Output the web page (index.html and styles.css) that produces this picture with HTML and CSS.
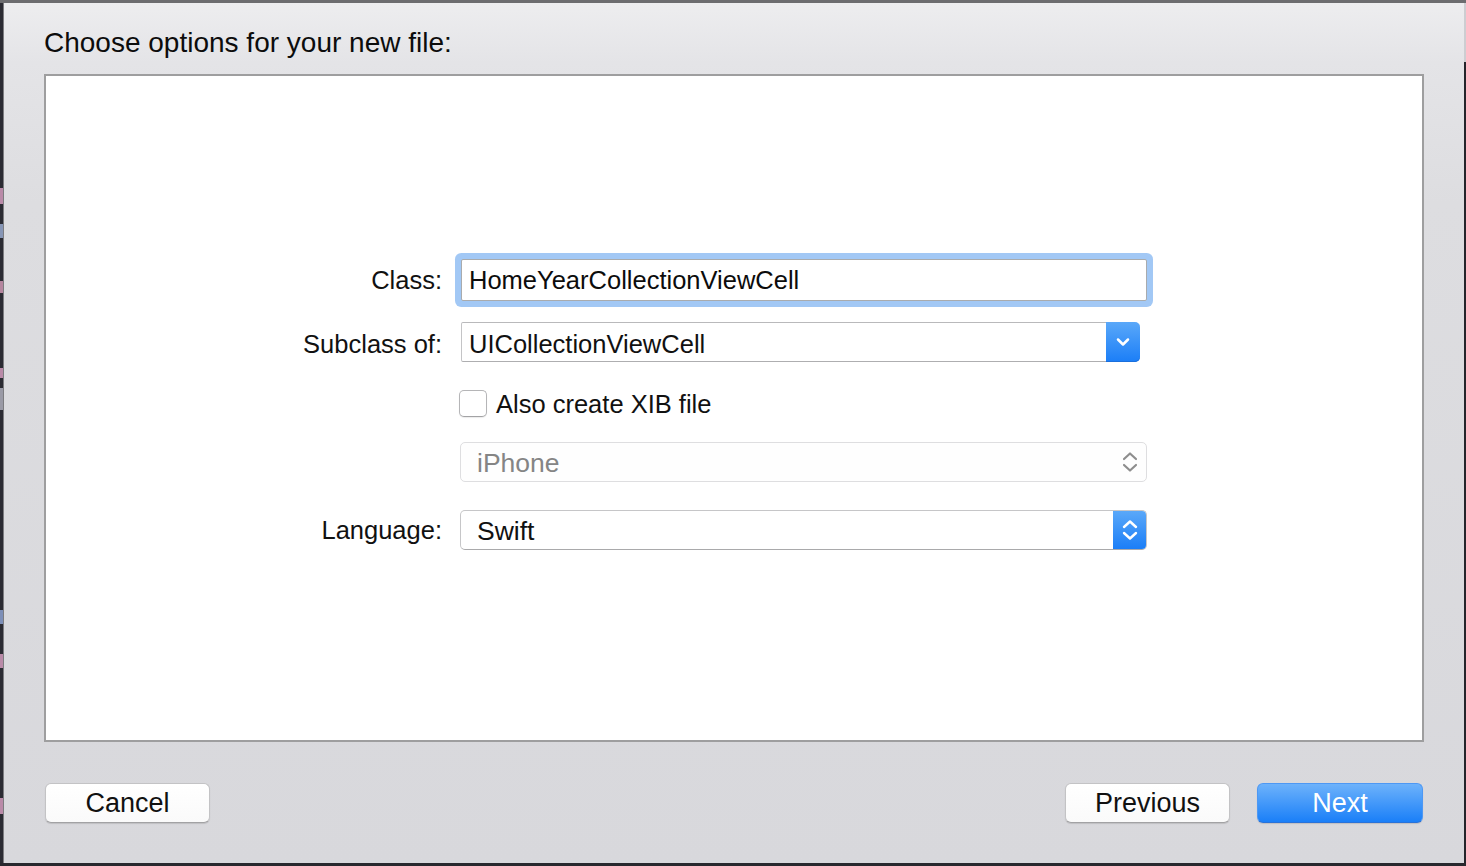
FILE: index.html
```html
<!DOCTYPE html>
<html lang="en">
<head>
<meta charset="utf-8">
<title>Choose options for your new file</title>
<link rel="stylesheet" href="styles.css">
</head>
<body>
<div class="screen">
  <div class="topline"></div>
  <div class="middle">
    <div class="edge-left">
      <span class="frag frag-a"></span>
      <span class="frag frag-b"></span>
      <span class="frag frag-c"></span>
      <span class="frag frag-d"></span>
      <span class="frag frag-e"></span>
      <span class="frag frag-f"></span>
      <span class="frag frag-g"></span>
      <span class="frag frag-h"></span>
    </div>
    <div class="sheet">
      <div class="header">
        <h1 class="title">Choose options for your new file:</h1>
      </div>
      <div class="panel">
        <div class="form">
          <div class="row row-class">
            <div class="label">Class:</div>
            <div class="textfield focused">HomeYearCollectionViewCell</div>
          </div>
          <div class="row row-subclass">
            <div class="label label-sub">Subclass of:</div>
            <div class="popup popup-sub">
              <div class="popup-value">UICollectionViewCell</div>
              <div class="popup-arrow">
                <svg width="16" height="12" viewBox="0 0 16 12"><path d="M3 3.5 L8 8.5 L13 3.5" fill="none" stroke="#fff" stroke-width="2.5" stroke-linecap="round" stroke-linejoin="round"/></svg>
              </div>
            </div>
          </div>
          <div class="row row-check">
            <div class="label"></div>
            <div class="checkbox"></div>
            <div class="check-label">Also create XIB file</div>
          </div>
          <div class="row row-device">
            <div class="label"></div>
            <div class="select disabled">
              <div class="select-value">iPhone</div>
              <div class="select-arrows">
                <svg width="18" height="26" viewBox="0 0 18 26"><path d="M3 10 L9 4.5 L15 10 M3 16 L9 21.5 L15 16" fill="none" stroke="#8e8e8e" stroke-width="2.2" stroke-linecap="round" stroke-linejoin="round"/></svg>
              </div>
            </div>
          </div>
          <div class="row row-lang">
            <div class="label">Language:</div>
            <div class="select">
              <div class="select-value">Swift</div>
              <div class="select-arrows blue">
                <svg width="18" height="26" viewBox="0 0 18 26"><path d="M3 10 L9 4.5 L15 10 M3 16 L9 21.5 L15 16" fill="none" stroke="#fff" stroke-width="2.4" stroke-linecap="round" stroke-linejoin="round"/></svg>
              </div>
            </div>
          </div>
        </div>
      </div>
      <div class="footer">
        <button class="btn">Cancel</button>
        <div class="btn-group">
          <button class="btn">Previous</button>
          <button class="btn primary">Next</button>
        </div>
      </div>
    </div>
    <div class="edge-right"><div class="edge-right-top"></div></div>
  </div>
  <div class="bottomline"></div>
</div>
</body>
</html>
```

FILE: styles.css
```css
html, body {
  margin: 0;
  padding: 0;
}

body {
  background: #2a2a31;
  font-family: "Liberation Sans", Arial, sans-serif;
  color: #111;
}

.screen {
  width: 1466px;
  height: 866px;
  display: flex;
  flex-direction: column;
  overflow: hidden;
}

.topline {
  flex: none;
  height: 3px;
  background: #6c6c6f;
}

.middle {
  flex: none;
  height: 860px;
  display: flex;
}

.edge-left {
  flex: none;
  width: 3px;
  background: #2b2b33;
  border-right: 1px solid #7c7c80;
  display: flex;
  flex-direction: column;
}

.frag {
  display: block;
  width: 3px;
  flex: none;
}

.frag-a { margin-top: 185px; height: 16px; background: #b98aa8; }
.frag-b { margin-top: 20px; height: 14px; background: #8796b6; }
.frag-c { margin-top: 43px; height: 12px; background: #b5869f; }
.frag-d { margin-top: 75px; height: 10px; background: #b98aa8; }
.frag-e { margin-top: 10px; height: 22px; background: #9a9aa6; }
.frag-f { margin-top: 200px; height: 14px; background: #7d8fb8; }
.frag-g { margin-top: 30px; height: 14px; background: #b98aa8; }
.frag-h { margin-top: 130px; height: 16px; background: #b98aa8; }

.sheet {
  flex: none;
  width: 1460px;
  box-sizing: border-box;
  padding: 0 40px;
  display: flex;
  flex-direction: column;
  background: linear-gradient(to bottom, #ededef 0px, #e4e4e7 60px, #dddde0 200px, #d8d8dc 100%);
}

.edge-right {
  flex: none;
  width: 2px;
  background: #25252b;
}

.edge-right-top {
  height: 59px;
  background: #cdcdd1;
}

.bottomline {
  flex: none;
  height: 3px;
  background: #28282e;
}

.header {
  flex: none;
  height: 71px;
  box-sizing: border-box;
  padding-top: 24px;
}

.title {
  margin: 0;
  font-size: 28px;
  line-height: 32px;
  font-weight: normal;
  color: #0c0c0c;
}

.panel {
  flex: none;
  height: 668px;
  box-sizing: border-box;
  border: 2px solid #9e9e9f;
  background: #ffffff;
}

.form {
  padding-top: 183px;
  display: flex;
  flex-direction: column;
}

.row {
  display: flex;
  align-items: center;
}

.row-subclass { margin-top: 21px; }
.row-check { margin-top: 28px; height: 27px; }
.row-device { margin-top: 25px; }
.row-lang { margin-top: 28px; }

.label {
  flex: none;
  width: 396px;
  text-align: right;
  font-size: 25.5px;
  color: #111;
  padding-top: 1px;
}

.label-sub {
  padding-top: 5px;
}

.textfield {
  margin-left: 19px;
  width: 686px;
  height: 42px;
  box-sizing: border-box;
  border: 1px solid #a9abad;
  border-radius: 1px;
  background: #fff;
  padding-left: 7px;
  font-size: 25.5px;
  line-height: 41px;
  color: #0c0c0c;
}

.textfield.focused {
  box-shadow: 0 0 0 6px #a2c8f5;
  border-radius: 2px;
}

.popup {
  display: flex;
  height: 40px;
}

.popup-sub {
  margin-left: 19px;
  width: 679px;
}

.popup-value {
  flex: 1;
  box-sizing: border-box;
  border: 1px solid #c4c4c6;
  border-top-color: #b9b9bb;
  border-bottom-color: #aeaeb0;
  border-right: none;
  border-radius: 2px 0 0 2px;
  padding-left: 7px;
  padding-top: 4px;
  font-size: 25.5px;
  line-height: 34px;
  color: #111;
  background: #fff;
}

.popup-arrow {
  flex: none;
  width: 34px;
  border-radius: 0 5px 5px 0;
  background: linear-gradient(to bottom, #5aa8f9, #1b7ef7);
  display: flex;
  align-items: center;
  justify-content: center;
  box-shadow: inset 0 -1px 0 #1a6fdc;
}

.checkbox {
  flex: none;
  margin-left: 17px;
  width: 28px;
  height: 27px;
  box-sizing: border-box;
  border: 1px solid #b5b5b7;
  border-bottom-color: #a3a3a5;
  border-radius: 5px;
  background: #fff;
  box-shadow: 0 1px 1px rgba(0, 0, 0, 0.08);
}

.check-label {
  margin-left: 9px;
  font-size: 25.5px;
  color: #111;
  padding-top: 1px;
}

.select {
  margin-left: 18px;
  width: 687px;
  height: 40px;
  display: flex;
  box-sizing: border-box;
  border: 1px solid #c6c6c8;
  border-bottom-color: #a9a9ab;
  border-radius: 5px;
  background: #fff;
  overflow: hidden;
}

.select.disabled {
  border-color: #dedee0;
  background: #fefefe;
}

.select-value {
  flex: 1;
  padding-left: 16px;
  font-size: 26.5px;
  line-height: 40px;
  color: #111;
}

.select.disabled .select-value {
  color: #858585;
}

.select-arrows {
  flex: none;
  width: 33px;
  display: flex;
  align-items: center;
  justify-content: center;
}

.select-arrows.blue {
  background: linear-gradient(to bottom, #5aa8f9, #1b7ef7);
}

.footer {
  flex: 1;
  display: flex;
  justify-content: space-between;
  align-items: flex-start;
  padding: 41px 1px 0 1px;
}

.btn-group {
  display: flex;
  gap: 27px;
}

.btn {
  width: 165px;
  height: 40px;
  box-sizing: border-box;
  border: 1px solid #c3c3c5;
  border-bottom-color: #a2a2a4;
  border-radius: 6px;
  background: linear-gradient(to bottom, #ffffff, #fafafa);
  box-shadow: 0 1px 1px rgba(0, 0, 0, 0.12);
  font-family: "Liberation Sans", Arial, sans-serif;
  font-size: 27px;
  color: #111;
  padding: 0;
  line-height: 36px;
}

.btn.primary {
  width: 166px;
  border-color: #4d98f4;
  border-bottom-color: #2a72d8;
  background: linear-gradient(to bottom, #6db2fb, #1a7ff8);
  color: #fff;
}
```
